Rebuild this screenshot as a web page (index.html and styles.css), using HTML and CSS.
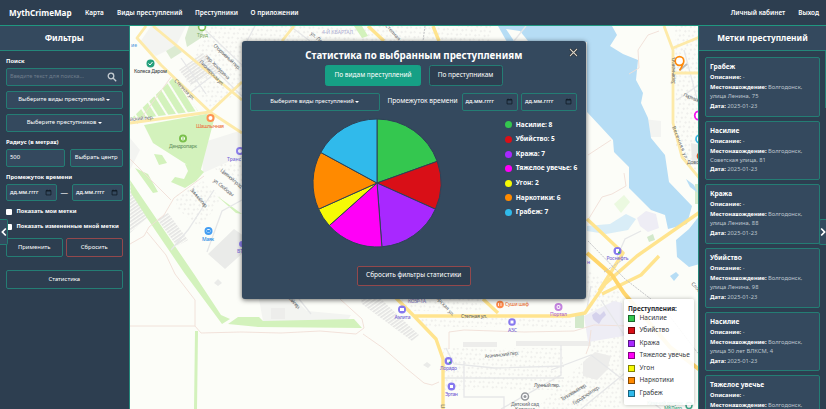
FILE: index.html
```
<!DOCTYPE html>
<html lang="ru">
<head>
<meta charset="utf-8">
<title>MythCrimeMap</title>
<link rel="stylesheet" href="styles.css">
</head>
<body>
<svg class="defs" width="0" height="0" aria-hidden="true">
  <symbol id="cal" viewBox="0 0 8 8"><path d="M1.200 1.800h5.600v5H1.200z" fill="none" stroke="#111b25" stroke-width=".9"/><path d="M1.200 2.200h5.600M2.400.8v1M5.600.8v1" stroke="#111b25" stroke-width="1.100"/></symbol>
</svg>
<nav class="nav">
  <a class="brand">MythCrimeMap</a>
  <a class="n1">Карта</a><a class="n2">Виды преступлений</a><a class="n3">Преступники</a><a class="n4">О приложении</a>
  <span class="grow"></span>
  <a class="n5">Личный кабинет</a><a class="n6">Выход</a>
</nav>
<div class="app">
  <aside class="side left">
    <h2>Фильтры</h2>
    <div class="filters">
      <label class="lbl">Поиск</label>
      <div class="field search"><span>Введите текст для поиска...</span><svg width="10" height="10" viewBox="0 0 10 10"><circle cx="4" cy="4" r="2.800"/><path d="M6 6l3.200 3.200"/></svg></div>
      <div class="field center kinds">Выберите виды преступлений<i class="caret"></i></div>
      <div class="field center who">Выберите преступников<i class="caret"></i></div>
      <label class="lbl radius">Радиус (в метрах)</label>
      <div class="row"><div class="field r500">500</div><div class="field center pick">Выбрать центр</div></div>
      <label class="lbl period">Промежуток времени</label>
      <div class="row dates"><div class="field date">дд.мм.гггг<svg><use href="#cal"/></svg></div><b>—</b><div class="field date">дд.мм.гггг<svg><use href="#cal"/></svg></div></div>
      <div class="check"><i></i><span>Показать мои метки</span></div>
      <div class="check second"><i></i><span>Показать измененные мной метки</span></div>
      <div class="row actions"><div class="field center apply">Применить</div><div class="field center danger">Сбросить</div></div>
      <div class="field center stat">Статистика</div>
    </div>
  </aside>
  <main class="map">
    <svg class="canvas" viewBox="129 26 570 383" width="570" height="383">
      <defs>
        <pattern id="houses" width="7" height="6" patternUnits="userSpaceOnUse" patternTransform="rotate(-38)"><path d="M1 1h2v2H1zM4.500 3h1.500v2H4.500z" fill="#efefec"/></pattern>
        <pattern id="park" width="3" height="3" patternUnits="userSpaceOnUse" patternTransform="rotate(-35)"><rect width="3" height="1.700" fill="#e4e4e3"/></pattern>
        <pattern id="furrow" width="9" height="5" patternUnits="userSpaceOnUse" patternTransform="rotate(-32)"><rect width="7" height="5" fill="#d3f2bc"/></pattern>
      </defs>
      <rect x="129" y="26" width="570" height="383" fill="#fcfdf8"/>
      <path fill="#f3f4f1" d="M150 26h35l-10 20-20 10-16-14zM200 143l38-12v26l-36 16zM129 138l10 12-10 20zM258 299h36l12 12 44 4-4 6h-84zM642 119l18 2v16h-14z"/>
      <g fill="url(#houses)">
        <path d="M205 26h36v66l-32 15-24-26zM174 196l28-15 18 17-20 30-24-19zM213 168l28-14v35zM241 26h115v15H241zM360 26h130v15H360zM400 299h80v12h-80zM420 318h150v9H420zM442 348h120v42H442zM590 290h30v119h-85l55-55zM674 26h25v150l-24-30zM586 270l20 12 14 40-34-9z"/>
      </g>
      <path fill="url(#park)" d="M178 70l24-17 14 18-26 14zM129 182l18 35-18 16zM156 219l11-6 20 27-11 6zM360 299h20l38 36-7 6-50-37z"/>
      <path fill="#ededeb" d="M462 342h34v5h-34zM515 341h75v5h-75zM582 362l12-10 16 4-4 14-10 10-14-4zM270 308h14v11h-14z"/>
      <path fill="#eaebe9" d="M207 254l26-25 10 7v16l-19 17zM213 283l4-4 4 4-4 3zM422 365l4-3 4 3-3 3zM690 143l9 2v20h-8z"/>
      <g fill="#d3f2bc">
        <path d="M143 125l62-11 9 2-15 57-47-30zM129 180l19 28 45 66 27 41 9 4-8 5-37-50-38-56-16-25zM227 324l10-7h21l4 4 91-2 8 9-104-1zM194 331h3l-1 78h-3z"/>
        <path d="M184 38l4-12h16l-4 12-14 9z" fill="#d9ead0"/>
        <path d="M165 51l10-6 6 7-11 7z" fill="#dcebd2"/>
        <path d="M170 182l4-5 9 2 4-8-3-7 11 2 8 6-8 9-11 7zM134 168l13 6 10 18-5 1zM216 196l25 18-6-1zM153 154l8 1 5 8-8 2zM353 26h8l6 10-6 2z"/>
        <path d="M613 204l10-9 6 7-9 11z" opacity=".4"/>
        <path d="M574 315h9v13h-9zM646 237l6-3 2 6-6 2zM694 184h5v20h-5z" fill="#d3e9cb"/>
      </g>
      <path fill="url(#furrow)" d="M131 118l41-40 25 33-47 6z"/>
      <path fill="#eeedf5" d="M583 316l30-15 8 2 2 33-36 6zM636 218l9-7 10 3 3 14-11 4-8-6z"/>
      <path d="M591 315l4-3 4 3 4-4 2 4-4 4-3 5-4-3-2-2z" fill="#d5d2ec"/>
      <g fill="#b6ddf5">
        <path d="M497 26L506 42H586V112L600 127 612 140 613 152 628 167 628 188 650 210 664 215 667 229 686 224 691 206 668 182 664 155 650 138 647 118 640 103 642 93 635 80 637 60 622 54 609 46 616 35 611 26z"/>
        <path d="M586 226l23-2 16-10 10 5-8 11-22 4-19-3z" opacity=".5"/>
        <path d="M675 240l13-11 11-14v49l-11 3-12-10zM669 276l6-4 3 3-5 6zM685 179l8 6 4 8-8-6z"/>
      </g>
      <path d="M505 29l14 2 8 10h-14z" fill="#fcfdf8"/>
      <g fill="none" stroke="#f0dfd7" stroke-width=".9">
        <path d="M129 159l41 41M170 77l-34 47M203 176l-30 22-10 17-15 12-5 9-14 8M146 232l19 23 9 19 20 26v26M129 326h65l6 7 40-1 40 1 39-2 36 3 8-6-2-9-22-20M362 334l20 14 24 21 17 14 8 2 7-3M587 155l23-15M587 220l14-23 10-3 14-8-2-13M448 349v-17l15-2 60 2 50-1 20-6 35 1M590 330l-2 16-3 8M628 74l10-6-1-18 10-15 11-4"/>
      </g>
      <g fill="none" stroke="#e6e7e8" stroke-width="1.300">
        <path d="M213 190l-26 40-17 20M241 200l-20 11-15 41M200 26l41 39M180 58l25 36M190 92l26-20 25 24M254 26l-8 15M310 314l-12-15M445 348l8 16 40 4 70-2M463 361v36h40v12M560 345v30l-60 34M443 378h120M640 231l-16 8-8 18M600 300l40 60-60 49M550 370l40-15 70 54M683 50l16 60M676 100l23-16M525 26l-12 15M289 26l20 15M590 286l-4 22"/>
      </g>
      <g fill="none" stroke="#fdeaa9" stroke-width="2.800" stroke-linejoin="round">
        <path d="M145 26l-9 12 24 27 49 47 32 21M152 26l89 74M129 123l80-11 32-30M293 26l-12 15"/>
        <path d="M663 26l9 24v73l9 34 18 22M672 48l27-11M672 73h27"/>
      </g>
      <g fill="none" stroke="#ffe48e" stroke-width="3.400" stroke-linejoin="round">
        <path d="M367 26l16 15M432 26l6 15M392 295l20 20 23 24 7 20v50M412 316h156l16-3 20-29 32-28 63-44M586 219l36 34-24 38M482 299l15 14M601 294l39-19 18-19"/>
      </g>
      <path d="M586 253l25 22 12 18 46 54 30 23" fill="none" stroke="#ffd66c" stroke-width="4"/>
      <path d="M587 241l37 38 40 31 35 46M424 26l-2 15M603 272l20-13" fill="none" stroke="#c5c6c8" stroke-width="1" stroke-dasharray="2 1"/>
      <g class="street">
        <text transform="translate(212 46) rotate(43)" textLength="35">Спортивный пер.</text>
        <text transform="translate(204 57) rotate(45)" textLength="32">пер. Хохлурина</text>
        <text transform="translate(198 62) rotate(46)" textLength="33">Пионерская ул.</text>
        <text transform="translate(173 81) rotate(46)" textLength="27">Степная ул.</text>
        <text transform="translate(129 121) rotate(-5)" textLength="24">йский пер.</text>
        <text transform="translate(219 171) rotate(40)" textLength="27">Цветной пр-зд</text>
        <text transform="translate(212 181) rotate(39)" textLength="25">ул. Свободы</text>
        <text transform="translate(189 190) rotate(50)" textLength="24">Зимний пер.</text>
        <text transform="translate(281 292) rotate(47)" textLength="24">Южный пер.</text>
        <text transform="translate(432 295) rotate(48)" textLength="29">Морская ул.</text>
        <text x="460" y="318" textLength="26">Степная ул.</text>
        <text transform="translate(484 358) rotate(-6)" textLength="34">Аганинский пер.</text>
        <text x="533" y="387" textLength="26">Лунный пер.</text>
        <text transform="translate(561 401) rotate(-31)" textLength="29">Тополёвый пер.</text>
        <text transform="translate(573 405) rotate(-33)" textLength="31">Городской пер.</text>
        <text transform="translate(444 408) rotate(-90)" textLength="4">П</text>
        <text transform="translate(674 84) rotate(-90)" textLength="27">Заречная ул.</text>
        <text transform="translate(682 96) rotate(22)" textLength="18">Партизан</text>
        <text transform="translate(671 127) rotate(68)" textLength="36">Весенняя ул.</text>
        <text x="686" y="164" textLength="12">Дово</text>
        <text transform="translate(309 34) rotate(40)" textLength="14">ул. Ле</text>
        <text transform="translate(384 26) rotate(48)" textLength="20">Степная</text>
        <text transform="translate(690 284) rotate(48)" textLength="12">Слоб</text>
      </g>
      <g class="poi">
        <text x="321" y="33.500" textLength="31" fill="#b4b3d5">4-Й КВАРТАЛ</text>
        <text x="130" y="47" fill="#599de0">ие</text>
        <circle cx="201" cy="27" r="3.400" fill="#fff" stroke="#84be55" stroke-width="1.600"/><text x="196" y="36.500" textLength="11" fill="#82b069">Труд</text>
        <circle cx="149.500" cy="63.500" r="4" fill="#27a17d"/><path d="M147.500 63.500l1.500 1.500 2.500-3" stroke="#fff" fill="none"/><text x="133" y="72.500" textLength="33" fill="#41454a">Колеса Даром</text>
        <circle cx="209.500" cy="118" r="3" fill="#fff" stroke="#ff9150" stroke-width="2"/><text x="195" y="127.500" textLength="28" fill="#ed7547">Шашлычная</text>
        <circle cx="182" cy="138.500" r="3" fill="#fff" stroke="#7ac04b" stroke-width="2"/><path d="M182 137v3" stroke="#7ac04b"/><text x="168" y="148" textLength="28" fill="#699463">Дендропарк</text>
        <circle cx="239" cy="151" r="3" fill="#fff" stroke="#8d80ee" stroke-width="2"/><text x="226" y="160.500" fill="#7869d6">Транс</text>
        <circle cx="207.500" cy="231" r="3" fill="#fff" stroke="#439df2" stroke-width="2"/><path d="M206 230h3v2.500h-3z" fill="#439df2"/><text x="201" y="240.500" textLength="12" fill="#278ae4">Маяк</text>
        <circle cx="241" cy="244" r="3" fill="#8d80ee"/><text x="236" y="252.500" fill="#7869d6">ВТ</text>
        <circle cx="401" cy="309.500" r="4" fill="#8678ef"/><path d="M399 308h4v3h-4z" fill="#fff"/><text x="393.500" y="318.800" textLength="16" fill="#7869d6">Аэлита</text>
        <text x="407" y="302.500" textLength="18" fill="#8b82c4">КОЗР-1А</text>
        <circle cx="447.500" cy="361" r="3.900" fill="#8678ef"/><path d="M446 359.500h3v3h-3z" fill="#fff"/><circle cx="449" cy="362.500" r="1" fill="#2aac5a"/><text x="439" y="370" textLength="17" fill="#7869d6">Лорадо</text>
        <circle cx="450.500" cy="386.500" r="3.900" fill="#8678ef"/><path d="M449 385h3v3h-3z" fill="#fff"/><text x="444" y="395.500" textLength="13" fill="#7869d6">Эртан</text>
        <circle cx="499" cy="304.500" r="3.800" fill="#ff8949"/><path d="M497.500 303v3M500 303v3" stroke="#fff" stroke-width=".8"/><text x="504" y="306" textLength="24" fill="#eb763d">Суши шеф</text>
        <circle cx="557.500" cy="307" r="3" fill="#fff" stroke="#c383df" stroke-width="2"/><circle cx="557.500" cy="307" r="1" fill="#c383df"/><text x="549" y="316" textLength="17" fill="#b36acf">Портал</text>
        <circle cx="511" cy="322" r="3.800" fill="#8678ef"/><path d="M509.500 320.500h3v3h-3z" fill="#fff"/><text x="507" y="331.500" textLength="9" fill="#7869d6">АЗС</text>
        <circle cx="524" cy="396.500" r="3.500" fill="#fff" stroke="#96999d" stroke-width="1.500"/><circle cx="524" cy="396.500" r="1.500" fill="#96999d"/><text x="510" y="405.500" textLength="28" fill="#74777c">Детский сад</text><text x="514" y="410.500" textLength="20" fill="#74777c">Катюша</text>
        <circle cx="616.500" cy="251" r="4" fill="#8678ef"/><path d="M615 249h3v4h-3z" fill="#fff"/><circle cx="618" cy="252.500" r="1" fill="#2aac5a"/><text x="605.500" y="260" textLength="22" fill="#7869d6">Роснефть</text>
        <text x="586" y="263.500" fill="#7869d6">н</text>
        <text x="646" y="405" textLength="36" fill="#3da588">Казачий дворик</text><text x="663" y="410" textLength="18" fill="#3da588">МКЛиго</text><circle cx="688" cy="405.500" r="3" fill="#fff" stroke="#3da588" stroke-width="1.500"/>
      </g>
      <path d="M679 70l7-6" stroke="#8b8b8b" stroke-width="2" opacity=".55"/>
      <g fill="none" stroke-width="1.700"><circle cx="678.500" cy="61" r="4.300" stroke="#ff8a0b" fill="#fff"/><path d="M682 63.500q-1 3.500-3.500 7" stroke="#ff8a0b"/><circle cx="698" cy="115.500" r="4.300" stroke="#f312f0" fill="#fff"/><circle cx="699" cy="139" r="4" stroke="#36b5e5" fill="#fff"/><circle cx="700" cy="156" r="3.500" stroke="#d35122" fill="#d35122"/><path d="M698 121l1 5" stroke="#f312f0"/></g>
    </svg>
    <section class="legend">
      <h4>Преступления:</h4>
      <p><i class="c1"></i><span>Насилие</span></p><p><i class="c2"></i><span>Убийство</span></p><p><i class="c3"></i><span>Кража</span></p><p><i class="c4"></i><span>Тяжелое увечье</span></p><p><i class="c5"></i><span>Угон</span></p><p><i class="c6"></i><span>Наркотики</span></p><p><i class="c7"></i><span>Грабеж</span></p>
    </section>
  </main>
  <aside class="side right">
    <h2>Метки преступлений</h2>
    <div class="cards">
      <article><h3>Грабеж</h3><p><b>Описание:</b> -</p><p><b>Местонахождение:</b> Волгодонск,<br>улица Ленина, 75</p><p><b>Дата:</b> 2025-01-23</p></article>
      <article><h3>Насилие</h3><p><b>Описание:</b> -</p><p><b>Местонахождение:</b> Волгодонск,<br>Советская улица, 81</p><p><b>Дата:</b> 2025-01-23</p></article>
      <article><h3>Кража</h3><p><b>Описание:</b> -</p><p><b>Местонахождение:</b> Волгодонск,<br>улица Ленина, 88</p><p><b>Дата:</b> 2025-01-23</p></article>
      <article><h3>Убийство</h3><p><b>Описание:</b> -</p><p><b>Местонахождение:</b> Волгодонск,<br>улица Ленина, 98</p><p><b>Дата:</b> 2025-01-23</p></article>
      <article><h3>Насилие</h3><p><b>Описание:</b> -</p><p><b>Местонахождение:</b> Волгодонск,<br>улица 50 лет ВЛКСМ, 4</p><p><b>Дата:</b> 2025-01-23</p></article>
      <article><h3>Тяжелое увечье</h3><p><b>Описание:</b> -</p><p><b>Местонахождение:</b> Волгодонск,</p></article>
    </div>
    <i class="thumb"></i>
  </aside>
</div>
<button class="handle hl"><svg width="6" height="10" viewBox="0 0 6 10"><path d="M4.800 1.500L1.400 5l3.400 3.500"/></svg></button>
<button class="handle hr"><svg width="6" height="10" viewBox="0 0 6 10"><path d="M1.200 1.500L4.600 5 1.200 8.500"/></svg></button>
<div class="modal">
  <svg class="close" width="9" height="9" viewBox="0 0 9 9"><path d="M1 1l7 7M8 1L1 8" stroke="#17191b" stroke-width="2.400"/><path d="M1 1l7 7M8 1L1 8" stroke="#d8d3c9" stroke-width="1.100"/></svg>
  <h1>Статистика по выбранным преступлениям</h1>
  <div class="tabs"><div class="tab on">По видам преступлений</div><div class="tab off">По преступникам</div></div>
  <div class="row tools"><div class="field center mkinds">Выберите виды преступлений<i class="caret"></i></div><span class="mlabel">Промежуток времени</span><div class="field date">дд.мм.гггг<svg><use href="#cal"/></svg></div><div class="field date last">дд.мм.гггг<svg><use href="#cal"/></svg></div></div>
  <div class="chart">
    <svg width="130" height="130" viewBox="-65 -65 130 130">
      <g stroke="#2d4257" stroke-width="1">
      <path fill="#34c74f" d="M0 0V-64A64 64 0 0 1 60.230-21.640z"/>
      <path fill="#d90f17" d="M0 0L60.230-21.640A64 64 0 0 1 58.400 26.180z"/>
      <path fill="#a828ff" d="M0 0L58.400 26.180A64 64 0 0 1 4.900 63.800z"/>
      <path fill="#ff00f7" d="M0 0L4.900 63.800A64 64 0 0 1-47.780 42.580z"/>
      <path fill="#f6fa05" d="M0 0L-47.780 42.580A64 64 0 0 1-58.400 26.180z"/>
      <path fill="#ff8a00" d="M0 0L-58.400 26.180A64 64 0 0 1-56.220-30.570z"/>
      <path fill="#30baeb" d="M0 0L-56.220-30.570A64 64 0 0 1 0-64z"/></g>
    </svg>
    <ul><li><i class="c1"></i>Насилие: 8</li><li><i class="c2"></i>Убийство: 5</li><li><i class="c3"></i>Кража: 7</li><li><i class="c4"></i>Тяжелое увечье: 6</li><li><i class="c5"></i>Угон: 2</li><li><i class="c6"></i>Наркотики: 6</li><li><i class="c7"></i>Грабеж: 7</li></ul>
  </div>
  <div class="reset">Сбросить фильтры статистики</div>
</div>
</body>
</html>
```
FILE: styles.css
```
* { box-sizing: border-box; margin: 0; padding: 0; }
body { width: 826px; height: 409px; overflow: hidden; background: #2d3e50; color: #fff; font-family: "Noto Sans", "Open Sans", sans-serif; font-size: 5.900px; line-height: 1; position: relative; }
.defs { position: absolute; }
i { display: block; font-style: normal; }
.nav { height: 26px; border-bottom: 1px solid #209780; background: #2d3e50; display: flex; align-items: center; padding: 1px 7px 0 9px; font-size: 6.450px; font-weight: 600; white-space: nowrap; }
.nav a { flex: none; }
.brand { font-size: 8.100px; font-weight: 700; width: 76px; }
.n1 { width: 32px; }
.n2 { width: 78px; }
.n3 { width: 55.500px; }
.n5 { margin-right: 13px; }
.grow { flex: 1; }
.app { display: flex; height: 383px; }
.side { background: #2d3e50; flex: none; overflow: hidden; position: relative; }
.left { width: 129.500px; border-right: 1px solid #24877a; }
.right { width: 128px; border-left: 1px solid #24877a; }
.map { flex: 1; min-width: 0; position: relative; overflow: hidden; }
.canvas { display: block; }
.side h2 { height: 25px; border-bottom: 1.500px solid #24877a; background: #34495e; text-align: center; line-height: 24px; font-size: 8.300px; font-weight: 700; white-space: nowrap; }
.filters { padding: 7px 6px 0; white-space: nowrap; }
.lbl { display: block; font-weight: 700; font-size: 5.800px; height: 10px; line-height: 6px; }
.field { border: 1px solid #247d74; border-radius: 2px; background: #34495e; height: 17.500px; display: flex; align-items: center; padding: 0 3px; white-space: nowrap; }
.center { justify-content: center; }
.caret { border: 2px solid transparent; border-top-color: #fff; border-bottom: 0; margin-left: 1.500px; }
.search { justify-content: space-between; color: #6f7d8c; padding-right: 5px; font-size: 5.600px; }
.search svg { fill: none; stroke: #c4cbd1; stroke-width: 1.300; }
.kinds, .who { margin-top: 5.500px; }
.radius { margin-top: 7.500px; }
.row { display: flex; justify-content: space-between; align-items: center; }
.r500 { width: 59px; }
.pick { width: 52.500px; }
.period { margin-top: 7px; }
.date { width: 50.500px; justify-content: space-between; font-weight: 500; font-size: 5.500px; }
.date svg { width: 7px; height: 7px; margin-right: 1px; }
.dates b { font-size: 7.500px; font-weight: 400; }
.check { display: flex; gap: 4.500px; align-items: center; height: 8px; margin-top: 6.500px; font-weight: 700; font-size: 5.650px; }
.check i { width: 6px; height: 6px; background: #fff; border-radius: 1px; flex: none; }
.second { margin-top: 7.500px; }
.actions { margin-top: 7px; }
.actions .field { height: 19px; width: 56.500px; background: #2d3e50; }
.actions .danger { border-color: #93484c; }
.stat { height: 19px; margin-top: 13px; background: #2d3e50; }
.cards { padding: 6px 6.500px 0 6px; white-space: nowrap; }
article { height: 59.500px; margin-bottom: 4.200px; border: 1px solid #247d74; border-radius: 2px; background: #34495e; padding: 4px 4px; color: #bec6ce; font-size: 5.750px; }
article h3 { color: #fff; font-size: 6.600px; line-height: 10px; margin-bottom: 1px; }
article p { line-height: 9px; margin-bottom: .9px; }
article b { color: #fff; }
.thumb { position: absolute; right: 0; top: 25px; width: 1px; height: 57px; background: #247d74; }
.handle { position: absolute; top: 218.500px; width: 8px; height: 26px; background: #34495e; border: 1px solid #247d74; display: flex; align-items: center; justify-content: center; }
.handle svg { fill: none; stroke: #fff; stroke-width: 1.700; flex: none; }
.hl { left: 0; border-left: 0; border-radius: 0 2px 2px 0; }
.hr { right: 0; width: 7px; border-right: 0; border-radius: 2px 0 0 2px; }
.street { font-size: 5px; fill: #63676b; }
.poi { font-size: 5px; font-weight: 500; }
.legend { position: absolute; left: 494px; top: 273px; width: 70px; height: 106px; padding: 6px 4.500px; background: #ffffffe8; color: #34383d; border-radius: 2px; box-shadow: 0 0 4px #0004; white-space: nowrap; font-size: 6.550px; }
.legend h4 { font-size: 6.400px; line-height: 8px; color: #22262b; }
.legend p { display: flex; align-items: center; height: 12.500px; gap: 4.500px; }
.legend p:first-of-type { margin-top: -1px; }
.legend i { width: 7px; height: 7px; border: 1px solid #0007; flex: none; }
.c1 { background: #34c74f; } .c2 { background: #d90f17; } .c3 { background: #a828ff; } .c4 { background: #ff00f7; } .c5 { background: #f6fa05; } .c6 { background: #ff8a00; } .c7 { background: #30baeb; }
.modal { position: absolute; left: 241.500px; top: 40.500px; width: 344.500px; height: 258.500px; background: #34495e; border-radius: 3px; box-shadow: 0 1px 5px #0009; padding: 9px 8.500px 0; display: flex; flex-direction: column; white-space: nowrap; }
.close { position: absolute; right: 8px; top: 7px; fill: none; }
h1 { font-size: 9.750px; line-height: 12px; height: 15.500px; text-align: center; font-weight: 700; }
.tabs { display: flex; gap: 7.500px; justify-content: center; font-size: 6.550px; }
.tab { height: 20.500px; border: 1px solid #247d74; border-radius: 2.500px; background: #2d3e50; display: flex; align-items: center; justify-content: center; }
.on { width: 96px; background: #16a085; border-color: #16a085; }
.off { width: 74px; }
.tools { margin-top: 7.500px; justify-content: flex-start; }
.mkinds { width: 129.500px; font-size: 5.700px; background: #34495e; }
.mlabel { width: 82px; padding-left: 8px; font-size: 6.600px; }
.tools .date { width: 56px; flex: none; }
.tools .last { margin-left: 3.500px; }
.chart { display: flex; height: 155px; padding: 7.500px 0 0 62.200px; }
.chart > svg { flex: none; }
ul { list-style: none; margin: -.5px 0 0 62.500px; font-size: 6.600px; font-weight: 700; }
li { height: 14.630px; display: flex; align-items: center; gap: 4px; }
li i { width: 7px; height: 7px; border-radius: 50%; flex: none; }
.reset { align-self: center; width: 113.500px; height: 20px; border: 1px solid #93484c; border-radius: 2px; background: #2d3e50; display: flex; align-items: center; justify-content: center; font-size: 6.500px; }
```
